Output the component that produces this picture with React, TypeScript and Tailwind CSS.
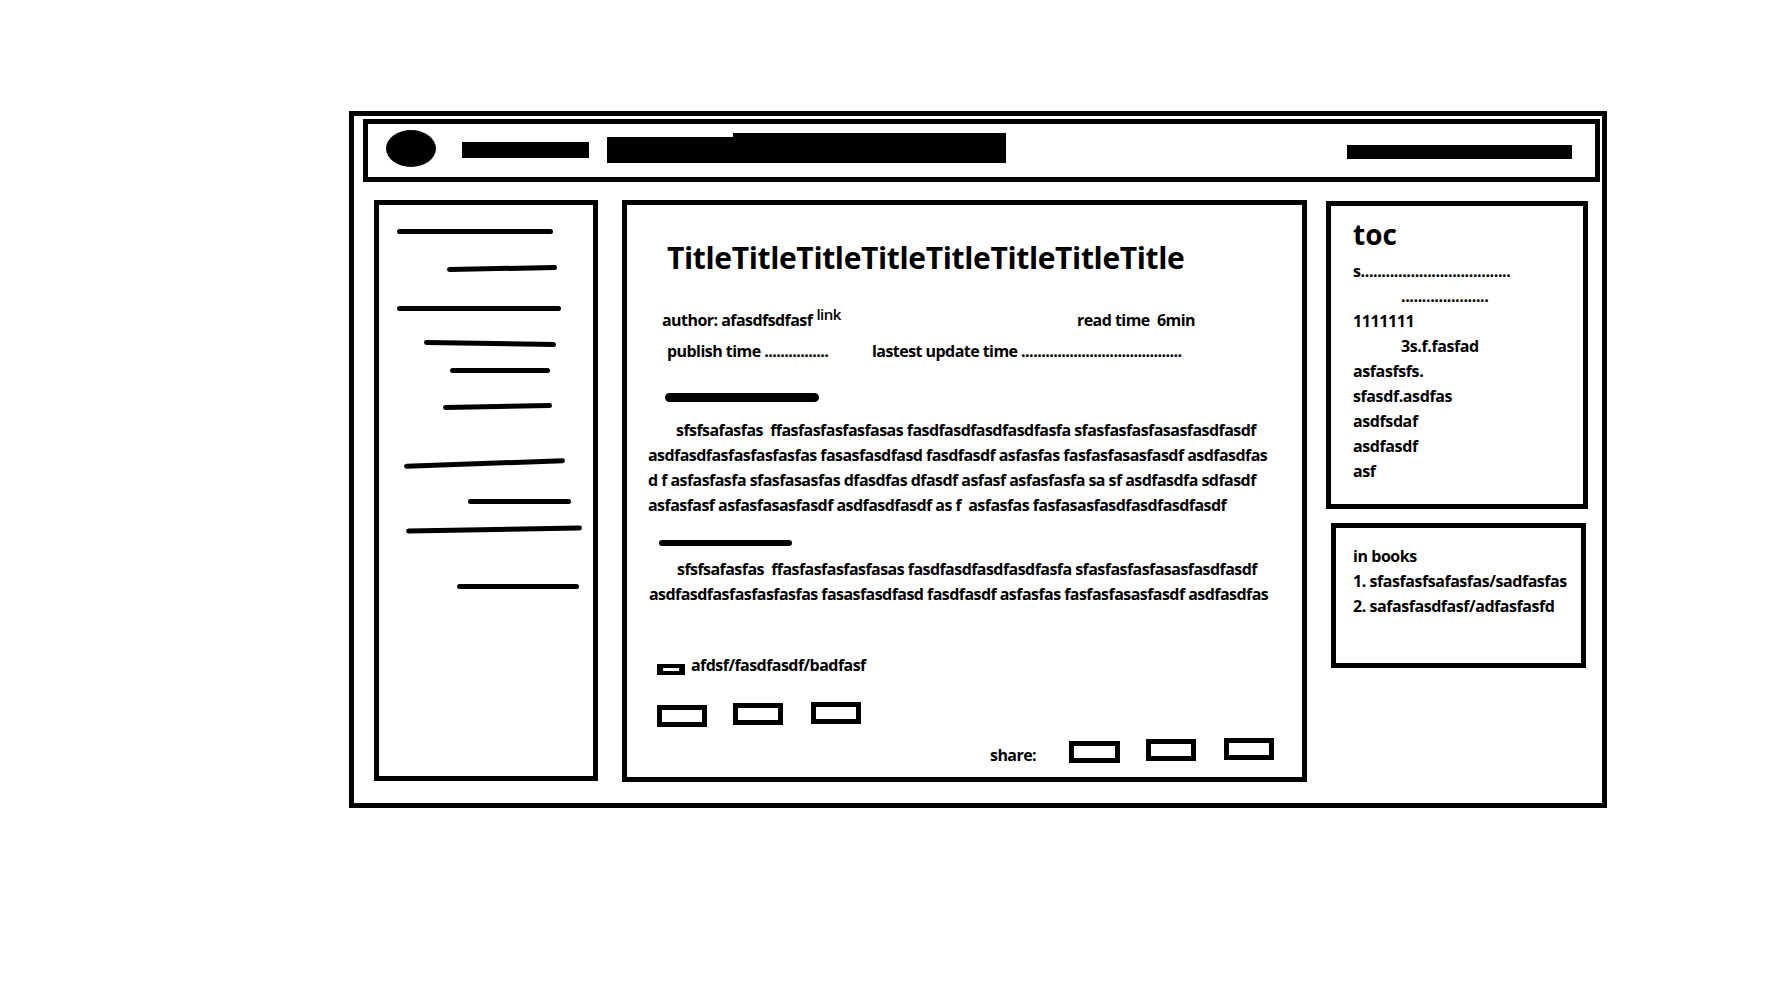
const sideLines = [
  'ml-[18px] mt-[24px] w-[156px]',
  'ml-[68px] mt-[32px] w-[110px] -rotate-[1deg]',
  'ml-[18px] mt-[35px] w-[164px]',
  'ml-[45px] mt-[30px] w-[132px] rotate-[1deg]',
  'ml-[71px] mt-[22px] w-[100px]',
  'ml-[64px] mt-[31px] w-[109px] -rotate-[1deg]',
  'ml-[25px] mt-[52px] w-[161px] -rotate-[2deg]',
  'ml-[89px] mt-[33px] w-[103px]',
  'ml-[27px] mt-[23px] w-[176px] -rotate-[1deg]',
  'ml-[78px] mt-[52px] w-[122px]',
];

const para1 = [
  { text: 'sfsfsafasfas  ffasfasfasfasfasas fasdfasdfasdfasdfasfa sfasfasfasfasasfasdfasdf', cls: 'ml-[49px]' },
  { text: 'asdfasdfasfasfasfasfas fasasfasdfasd fasdfasdf asfasfas fasfasfasasfasdf asdfasdfas', cls: 'ml-[21px]' },
  { text: 'd f asfasfasfa sfasfasasfas dfasdfas dfasdf asfasf asfasfasfa sa sf asdfasdfa sdfasdf', cls: 'ml-[21px]' },
  { text: 'asfasfasf asfasfasasfasdf asdfasdfasdf as f  asfasfas fasfasasfasdfasdfasdfasdf', cls: 'ml-[21px]' },
];

const para2 = [
  { text: 'sfsfsafasfas  ffasfasfasfasfasas fasdfasdfasdfasdfasfa sfasfasfasfasasfasdfasdf', cls: 'ml-[50px]' },
  { text: 'asdfasdfasfasfasfasfas fasasfasdfasd fasdfasdf asfasfas fasfasfasasfasdf asdfasdfas', cls: 'ml-[22px]' },
];

const tocItems = [
  { text: 's' + '.'.repeat(36), cls: '' },
  { text: '.'.repeat(21), cls: 'pl-[48px]' },
  { text: '1111111', cls: '' },
  { text: '3s.f.fasfad', cls: 'pl-[48px]' },
  { text: 'asfasfsfs.', cls: '' },
  { text: 'sfasdf.asdfas', cls: '' },
  { text: 'asdfsdaf', cls: '' },
  { text: 'asdfasdf', cls: '' },
  { text: 'asf', cls: '' },
];

function Box({ className }: { className: string }) {
  return <div className={`h-[22px] w-[50px] border-[5px] border-black ${className}`} />;
}

export default function App() {
  return (
    <div className="min-h-screen bg-white pl-[349px] pt-[111px] font-['Open_Sans',sans-serif] font-bold text-black">
      <div className="flex h-[697px] w-[1258px] flex-col border-[5px] border-black">
        {/* top bar */}
        <header className="ml-[9px] mt-[3px] flex h-[63px] w-[1237px] items-start border-[5px] border-black">
          <div className="ml-[18px] mt-[6px] h-[37px] w-[50px] rounded-[50%] bg-black" />
          <div className="ml-[26px] mt-[18px] h-[16px] w-[127px] bg-black" />
          <div className="ml-[18px] mt-[9px] flex h-[30px] items-end">
            <div className="h-[26px] w-[126px] bg-black" />
            <div className="h-[30px] w-[273px] bg-black" />
          </div>
          <div className="ml-auto mr-[23px] mt-[21px] h-[14px] w-[225px] bg-black" />
        </header>

        <div className="mt-[18px] flex items-start">
          {/* nav */}
          <aside className="ml-[20px] flex h-[581px] w-[224px] flex-col border-[5px] border-black">
            {sideLines.map((cls, i) => (
              <div key={i} className={`h-[5px] rounded-full bg-black ${cls}`} />
            ))}
          </aside>

          {/* article */}
          <main className="ml-[24px] flex h-[582px] w-[685px] flex-col border-[5px] border-black text-[16px] leading-[24px] tracking-[-0.55px]">
            <h1 className="ml-[40px] mt-[33px] text-[30px] leading-[40px] tracking-[-0.35px]">
              TitleTitleTitleTitleTitleTitleTitleTitle
            </h1>
            <div className="ml-[35px] mt-[30px] flex">
              <span className="w-[415px]">
                author: afasdfsdfasf
                <span className="relative -top-[6px] ml-[4px] text-[15px] font-semibold">link</span>
              </span>
              <span className="whitespace-pre">read time  6min</span>
            </div>
            <div className="ml-[40px] mt-[7px] flex">
              <span className="w-[205px]">publish time {'.'.repeat(16)}</span>
              <span>lastest update time {'.'.repeat(40)}</span>
            </div>

            <div className="ml-[38px] mt-[30px] h-[9px] w-[154px] rounded-full bg-black" />
            <div className="mt-[16px] leading-[25px]">
              {para1.map((l, i) => (
                <p key={i} className={`whitespace-pre ${l.cls}`}>{l.text}</p>
              ))}
            </div>

            <div className="ml-[32px] mt-[22px] h-[6px] w-[133px] rounded-full bg-black" />
            <div className="mt-[11px] leading-[25px]">
              {para2.map((l, i) => (
                <p key={i} className={`whitespace-pre ${l.cls}`}>{l.text}</p>
              ))}
            </div>

            <div className="ml-[30px] mt-[46px] flex items-start">
              <div className="mt-[11px] h-[11px] w-[28px] border-x-[6px] border-y-[4px] border-black" />
              <span className="ml-[6px]">afdsf/fasdfasdf/badfasf</span>
            </div>

            <div className="mt-[25px] flex items-start">
              <Box className="ml-[30px] mt-[3px]" />
              <Box className="ml-[26px] mt-[1px]" />
              <Box className="ml-[28px]" />
            </div>

            <div className="ml-[363px] mt-[11px] flex items-start">
              <span className="mt-[5px] w-[79px]">share:</span>
              <Box className="mt-[3px] w-[51px]" />
              <Box className="ml-[26px] mt-[1px]" />
              <Box className="ml-[28px]" />
            </div>
          </main>

          {/* right column */}
          <div className="ml-[19px] mt-[1px] flex flex-col items-start">
            <section className="flex h-[308px] w-[262px] flex-col border-[5px] border-black pl-[22px] text-[16px] leading-[25px] tracking-[-0.4px]">
              <h2 className="mt-[12px] text-[28px] leading-[32px] tracking-normal">toc</h2>
              <ul className="mt-[9px]">
                {tocItems.map((t, i) => (
                  <li key={i} className={t.cls}>{t.text}</li>
                ))}
              </ul>
            </section>
            <section className="ml-[5px] mt-[14px] h-[145px] w-[255px] border-[5px] border-black pl-[17px] pt-[16px] text-[16px] leading-[25px] tracking-[-0.45px]">
              <div>in books</div>
              <div>1. sfasfasfsafasfas/sadfasfas</div>
              <div>2. safasfasdfasf/adfasfasfd</div>
            </section>
          </div>
        </div>
      </div>
    </div>
  );
}
